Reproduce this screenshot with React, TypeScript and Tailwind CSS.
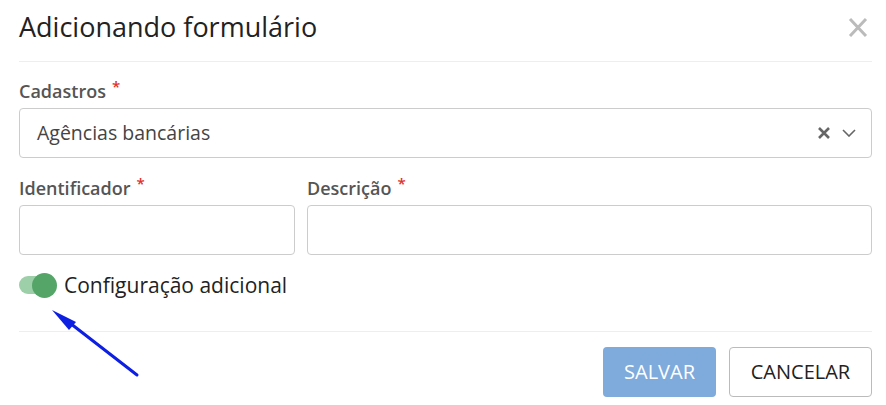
import { useState } from 'react';

function Label({ text }: { text: string }) {
  return (
    <label className="mb-[4px] block text-[18px] font-semibold leading-[24px] text-[#555]">
      {text}
      <span className="relative top-[-6px] ml-[6px] text-[15px] text-[#e0302c]">*</span>
    </label>
  );
}

function App() {
  const [extra, setExtra] = useState(true);

  return (
    <div className="relative min-h-screen bg-white font-['Open_Sans',sans-serif] text-[#222]">
      {/* Header */}
      <div className="ml-[19px] mr-[14px] flex h-[62px] items-start justify-between border-b border-[#eee] pt-[9px]">
        <h1 className="text-[27px] leading-[36px] text-[#222]">Adicionando formulário</h1>
        <button className="mr-[4px] mt-[8px] text-[#bbb]">
          <svg width="20" height="21" viewBox="0 0 20 21" fill="none">
            <path d="M2 2 L18 19 M18 2 L2 19" stroke="currentColor" strokeWidth="3" />
          </svg>
        </button>
      </div>

      {/* Body */}
      <div className="ml-[19px] mr-[14px] border-b border-[#eee] pb-[32px] pt-[17px]">
        <Label text="Cadastros" />
        <div className="flex h-[50px] items-center justify-between rounded-[4px] border border-[#ccc] pl-[17px] pr-[15px]">
          <span className="text-[19.5px] text-[#444]">Agências bancárias</span>
          <div className="flex items-center gap-[11px] text-[#666]">
            <svg width="14" height="14" viewBox="0 0 14 14">
              <path d="M2 2 L12 12 M12 2 L2 12" stroke="currentColor" strokeWidth="2.6" />
            </svg>
            <svg width="14" height="8" viewBox="0 0 14 8" fill="none">
              <path d="M1 1 L7 7 L13 1" stroke="currentColor" strokeWidth="1.6" />
            </svg>
          </div>
        </div>

        <div className="mt-[18px] flex gap-[12px]">
          <div className="w-[276px]">
            <Label text="Identificador" />
            <input className="h-[50px] w-full rounded-[4px] border border-[#ccc] px-[12px] outline-none" />
          </div>
          <div className="flex-1">
            <Label text="Descrição" />
            <input className="h-[50px] w-full rounded-[4px] border border-[#ccc] px-[12px] outline-none" />
          </div>
        </div>

        <div className="mt-[16px] flex items-center gap-[7px]">
          <button
            onClick={() => setExtra(!extra)}
            className="relative flex h-[25px] w-[38px] items-center"
          >
            <span className="h-[18px] w-[32px] rounded-full bg-[#9dcfa8]" />
            <span
              className={
                extra
                  ? 'absolute right-0 top-0 h-[25px] w-[25px] rounded-full bg-[#55a569]'
                  : 'absolute left-0 top-0 h-[25px] w-[25px] rounded-full bg-[#ddd]'
              }
            />
          </button>
          <span className="text-[21px] leading-[28px] text-[#222]">Configuração adicional</span>
        </div>
      </div>

      {/* Footer */}
      <div className="ml-[19px] mr-[14px] flex justify-end gap-[13px] pt-[15px]">
        <button className="h-[50px] w-[113px] rounded-[4px] bg-[#7eaadc] text-[20px] text-white">
          SALVAR
        </button>
        <button className="h-[50px] w-[143px] rounded-[4px] border border-[#bbb] text-[20px] text-[#222]">
          CANCELAR
        </button>
      </div>

      {/* Annotation arrow */}
      <svg className="pointer-events-none absolute left-0 top-0" width="200" height="405">
        <line x1="137" y1="375" x2="66" y2="320" stroke="#0c1fe2" strokeWidth="3" strokeLinecap="round" />
        <polygon points="52,310 76,322 69,330" fill="#0c1fe2" />
      </svg>
    </div>
  );
}

export default App;
